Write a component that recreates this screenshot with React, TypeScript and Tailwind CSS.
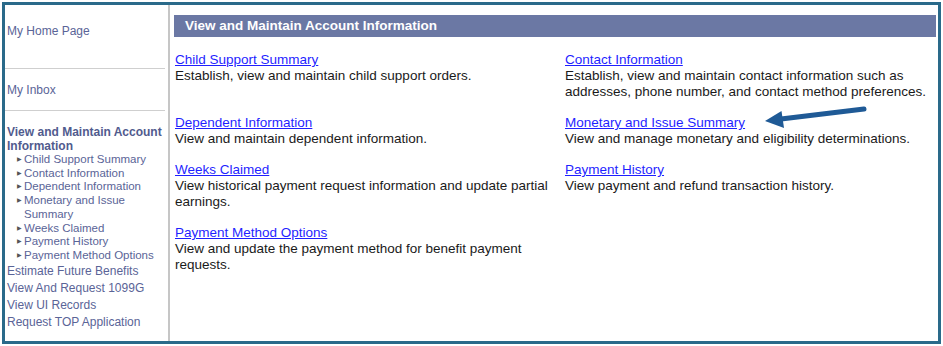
const subItems = [
  "Child Support Summary",
  "Contact Information",
  "Dependent Information",
  "Monetary and Issue Summary",
  "Weeks Claimed",
  "Payment History",
  "Payment Method Options",
];

const moreLinks = [
  "Estimate Future Benefits",
  "View And Request 1099G",
  "View UI Records",
  "Request TOP Application",
];

const entries = [
  ["Child Support Summary", "Establish, view and maintain child support orders."],
  [
    "Contact Information",
    "Establish, view and maintain contact information such as addresses, phone number, and contact method preferences.",
  ],
  ["Dependent Information", "View and maintain dependent information."],
  ["Monetary and Issue Summary", "View and manage monetary and eligibility determinations."],
  ["Weeks Claimed", "View historical payment request information and update partial earnings."],
  ["Payment History", "View payment and refund transaction history."],
  ["Payment Method Options", "View and update the payment method for benefit payment requests."],
];

function Sidebar() {
  return (
    <div className="w-[165px] shrink-0 border-r-2 border-[#c6c6c6] text-[12px] text-[#5a6497]">
      <div className="mr-[3px] flex h-[64px] items-center border-b border-[#cfcfcf] pb-[11px] pl-[2px]">
        My Home Page
      </div>
      <div className="mr-[3px] flex h-[42px] items-center border-b border-[#cfcfcf] pl-[2px]">
        My Inbox
      </div>
      <div className="pl-[2px] pt-[14px] text-[12px] font-bold leading-[14px] text-[#515b8e]">
        View and Maintain Account Information
      </div>
      <ul className="text-[11.5px] leading-[13.7px]">
        {subItems.map((item) => (
          <li key={item} className="flex pl-[12px]">
            <span className="w-[5px] shrink-0 text-[6px] leading-[13.7px] text-[#555]">▶</span>
            <span className="pl-[2px]">{item}</span>
          </li>
        ))}
      </ul>
      <ul className="leading-[17px]">
        {moreLinks.map((item) => (
          <li key={item} className="pl-[2px]">
            {item}
          </li>
        ))}
      </ul>
    </div>
  );
}

function Arrow() {
  return (
    <svg
      className="absolute left-[760px] top-[100px]"
      width="110"
      height="30"
      viewBox="0 0 110 30"
    >
      <line x1="104" y1="9" x2="21" y2="19" stroke="#1f5a96" strokeWidth="5" strokeLinecap="round" />
      <polygon points="5,21 21.5,11 24,28" fill="#1f5a96" />
    </svg>
  );
}

export default function App() {
  return (
    <div className="relative h-[346px] w-[943px] bg-white p-[2px] font-['Liberation_Sans',Arial,sans-serif]">
      <div className="flex h-full border-[3px] border-[#2a6a8a]">
        <Sidebar />
        <div className="flex-1 pl-[4px] pr-[2px] pt-[10px]">
          <div className="flex h-[22px] items-center bg-[#6b78a4] pl-[11px] text-[13.5px] font-bold text-white">
            View and Maintain Account Information
          </div>
          <div className="mt-[15px] grid grid-cols-[390px_1fr] pl-[1px] text-[13.5px] leading-[16px]">
            {entries.map(([title, desc]) => (
              <div key={title} className="pb-[15px] pr-[4px]">
                <a href="#" className="text-[#1f1fff] underline">
                  {title}
                </a>
                <div className="text-[#1a1a1a]">{desc}</div>
              </div>
            ))}
          </div>
        </div>
      </div>
      <Arrow />
    </div>
  );
}
